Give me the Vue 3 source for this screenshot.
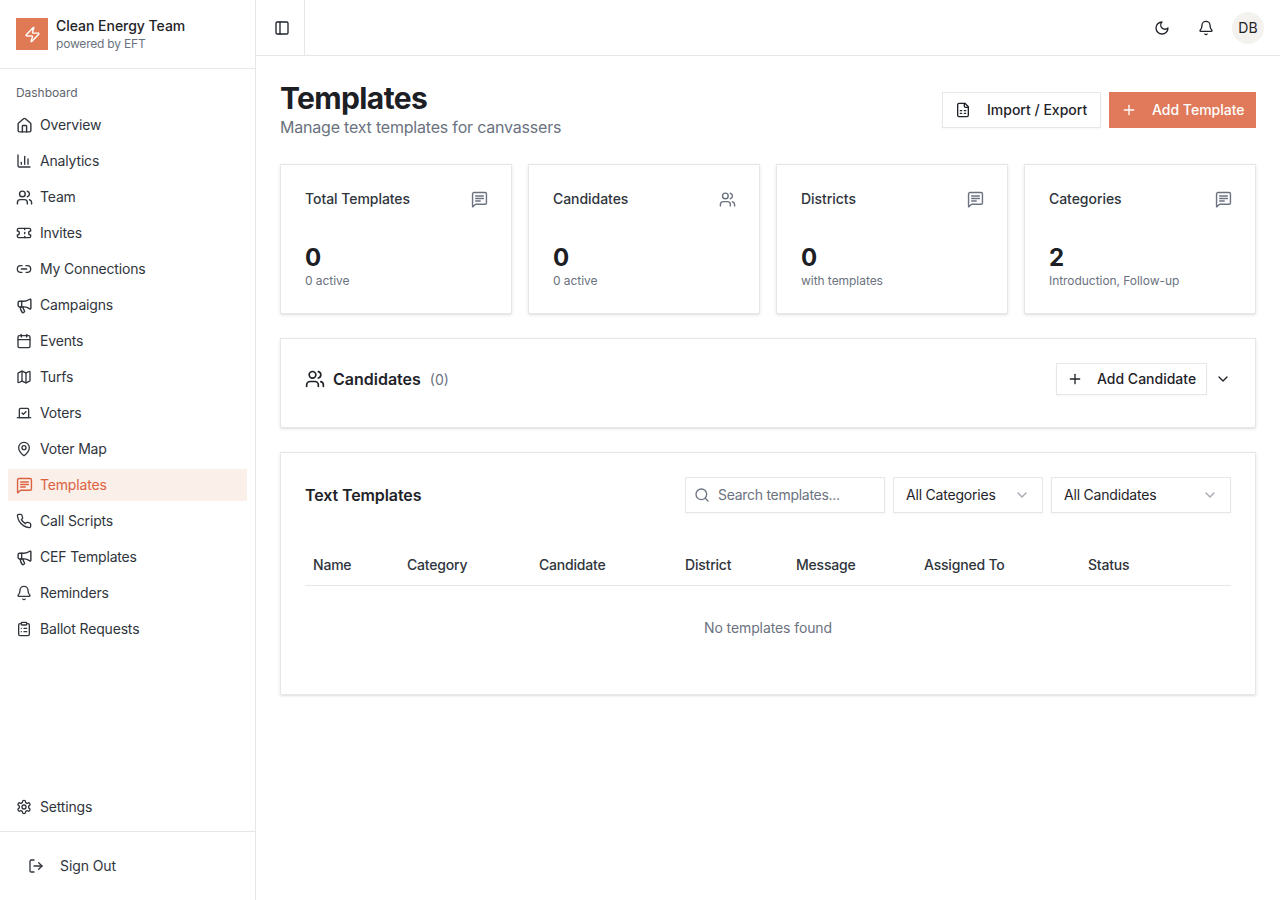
<script setup>
const P = {
  house: ['M15 21v-8a1 1 0 0 0-1-1h-4a1 1 0 0 0-1 1v8', 'M3 10a2 2 0 0 1 .709-1.528l7-5.999a2 2 0 0 1 2.582 0l7 5.999A2 2 0 0 1 21 10v9a2 2 0 0 1-2 2H5a2 2 0 0 1-2-2z'],
  chart: ['M3 3v16a2 2 0 0 0 2 2h16', 'M18 17V9', 'M13 17V5', 'M8 17v-3'],
  users: ['M16 21v-2a4 4 0 0 0-4-4H6a4 4 0 0 0-4 4v2', 'M13 7a4 4 0 1 1-8 0a4 4 0 0 1 8 0', 'M22 21v-2a4 4 0 0 0-3-3.87', 'M16 3.13a4 4 0 0 1 0 7.75'],
  ticket: ['M2 9a3 3 0 0 1 0 6v2a2 2 0 0 0 2 2h16a2 2 0 0 0 2-2v-2a3 3 0 0 1 0-6V7a2 2 0 0 0-2-2H4a2 2 0 0 0-2 2Z', 'M13 5v2', 'M13 17v2', 'M13 11v2'],
  link: ['M9 17H7A5 5 0 0 1 7 7h2', 'M15 7h2a5 5 0 1 1 0 10h-2', 'M8 12h8'],
  megaphone: ['M11 6a13 13 0 0 0 8.4-2.8A1 1 0 0 1 21 4v12a1 1 0 0 1-1.6.8A13 13 0 0 0 11 14H5a2 2 0 0 1-2-2V8a2 2 0 0 1 2-2z', 'M6 14a12 12 0 0 0 2.4 7.2 2 2 0 0 0 3.2-2.4A8 8 0 0 1 10 14', 'M8 6v8'],
  calendar: ['M8 2v4', 'M16 2v4', 'M5 4h14a2 2 0 0 1 2 2v14a2 2 0 0 1-2 2H5a2 2 0 0 1-2-2V6a2 2 0 0 1 2-2z', 'M3 10h18'],
  map: ['M14.106 5.553a2 2 0 0 0 1.788 0l3.659-1.83A1 1 0 0 1 21 4.619v12.764a1 1 0 0 1-.553.894l-4.553 2.277a2 2 0 0 1-1.788 0l-4.212-2.106a2 2 0 0 0-1.788 0l-3.659 1.83A1 1 0 0 1 3 19.381V6.618a1 1 0 0 1 .553-.894l4.553-2.277a2 2 0 0 1 1.788 0z', 'M15 5.764v15', 'M9 3.236v15'],
  vote: ['m9 12 2 2 4-4', 'M5 7c0-1.1.9-2 2-2h10a2 2 0 0 1 2 2v12H5V7Z', 'M22 19H2'],
  pin: ['M20 10c0 4.993-5.539 10.193-7.399 11.799a1 1 0 0 1-1.202 0C9.539 20.193 4 14.993 4 10a8 8 0 0 1 16 0', 'M15 10a3 3 0 1 1-6 0a3 3 0 0 1 6 0'],
  message: ['M2.2 4.2a2 2 0 0 1 2-2h15.6a2 2 0 0 1 2 2v12.6a2 2 0 0 1-2 2H6.6l-4.4 3.6z', 'M6.6 7h10.8', 'M6.6 10.6h10.8', 'M6.6 14.2h6.4'],
  phone: ['M22 16.92v3a2 2 0 0 1-2.18 2 19.79 19.79 0 0 1-8.63-3.07 19.5 19.5 0 0 1-6-6 19.79 19.79 0 0 1-3.07-8.67A2 2 0 0 1 4.11 2h3a2 2 0 0 1 2 1.72 12.84 12.84 0 0 0 .7 2.81 2 2 0 0 1-.45 2.11L8.09 9.91a16 16 0 0 0 6 6l1.27-1.27a2 2 0 0 1 2.11-.45 12.84 12.84 0 0 0 2.81.7A2 2 0 0 1 22 16.92z'],
  bell: ['M10.268 21a2 2 0 0 0 3.464 0', 'M3.262 15.326A1 1 0 0 0 4 17h16a1 1 0 0 0 .74-1.673C19.41 13.956 18 12.499 18 8A6 6 0 0 0 6 8c0 4.499-1.411 5.956-2.738 7.326'],
  clipboard: ['M9 2h6a1 1 0 0 1 1 1v2a1 1 0 0 1-1 1H9a1 1 0 0 1-1-1V3a1 1 0 0 1 1-1z', 'M16 4h2a2 2 0 0 1 2 2v14a2 2 0 0 1-2 2H6a2 2 0 0 1-2-2V6a2 2 0 0 1 2-2h2', 'M12 11h4', 'M12 16h4', 'M8 11h.01', 'M8 16h.01'],
  settings: ['M12.22 2h-.44a2 2 0 0 0-2 2v.18a2 2 0 0 1-1 1.73l-.43.25a2 2 0 0 1-2 0l-.15-.08a2 2 0 0 0-2.73.73l-.22.38a2 2 0 0 0 .73 2.73l.15.1a2 2 0 0 1 1 1.72v.51a2 2 0 0 1-1 1.74l-.15.09a2 2 0 0 0-.73 2.73l.22.38a2 2 0 0 0 2.73.73l.15-.08a2 2 0 0 1 2 0l.43.25a2 2 0 0 1 1 1.73V20a2 2 0 0 0 2 2h.44a2 2 0 0 0 2-2v-.18a2 2 0 0 1 1-1.73l.43-.25a2 2 0 0 1 2 0l.15.08a2 2 0 0 0 2.73-.73l.22-.39a2 2 0 0 0-.73-2.73l-.15-.08a2 2 0 0 1-1-1.74v-.5a2 2 0 0 1 1-1.74l.15-.09a2 2 0 0 0 .73-2.73l-.22-.38a2 2 0 0 0-2.73-.73l-.15.08a2 2 0 0 1-2 0l-.43-.25a2 2 0 0 1-1-1.73V4a2 2 0 0 0-2-2z', 'M15 12a3 3 0 1 1-6 0a3 3 0 0 1 6 0'],
  logout: ['m16 17 5-5-5-5', 'M21 12H9', 'M9 21H5a2 2 0 0 1-2-2V5a2 2 0 0 1 2-2h4'],
  panel: ['M5 3h14a2 2 0 0 1 2 2v14a2 2 0 0 1-2 2H5a2 2 0 0 1-2-2V5a2 2 0 0 1 2-2z', 'M9 3v18'],
  moon: ['M12 3a6 6 0 0 0 9 9 9 9 0 1 1-9-9Z'],
  sheet: ['M15 2H6a2 2 0 0 0-2 2v16a2 2 0 0 0 2 2h12a2 2 0 0 0 2-2V7Z', 'M14 2v4a2 2 0 0 0 2 2h4', 'M8 13h2', 'M14 13h2', 'M8 17h2', 'M14 17h2'],
  plus: ['M5 12h14', 'M12 5v14'],
  chevron: ['m6 9 6 6 6-6'],
  search: ['M19 11a8 8 0 1 1-16 0a8 8 0 0 1 16 0', 'm21 21-4.3-4.3'],
  zap: ['M4 14a1 1 0 0 1-.78-1.63l9.9-10.2a.5.5 0 0 1 .86.46l-1.92 6.02A1 1 0 0 0 13 10h7a1 1 0 0 1 .78 1.63l-9.9 10.2a.5.5 0 0 1-.86-.46l1.92-6.02A1 1 0 0 0 11 14z'],
}
const big = new Set(['house', 'users', 'megaphone', 'message'])
const nav = [
  ['Overview', 'house'], ['Analytics', 'chart'], ['Team', 'users'], ['Invites', 'ticket'],
  ['My Connections', 'link'], ['Campaigns', 'megaphone'], ['Events', 'calendar'], ['Turfs', 'map'],
  ['Voters', 'vote'], ['Voter Map', 'pin'], ['Templates', 'message'], ['Call Scripts', 'phone'],
  ['CEF Templates', 'megaphone'], ['Reminders', 'bell'], ['Ballot Requests', 'clipboard'],
]
const stats = [
  ['Total Templates', 'message', '0', '0 active'],
  ['Candidates', 'users', '0', '0 active'],
  ['Districts', 'message', '0', 'with templates'],
  ['Categories', 'message', '2', 'Introduction, Follow-up'],
]
const cols = ['Name', 'Category', 'Candidate', 'District', 'Message', 'Assigned To', 'Status']
</script>

<template>
  <div class="app">
    <aside class="sidebar">
      <div class="brand">
        <div class="logo">
          <svg class="i17" viewBox="0 0 24 24"><path v-for="d in P.zap" :key="d" :d="d" /></svg>
        </div>
        <div class="brand-text">
          <div class="brand-name">Clean Energy Team</div>
          <div class="brand-sub">powered by EFT</div>
        </div>
      </div>
      <nav class="nav">
        <div class="nav-label">Dashboard</div>
        <a v-for="n in nav" :key="n[0]" class="nav-item" :class="{ active: n[0] === 'Templates' }">
          <svg :class="big.has(n[1]) ? 'i17' : 'i16'" viewBox="0 0 24 24"><path v-for="d in P[n[1]]" :key="d" :d="d" /></svg>
          <span>{{ n[0] }}</span>
        </a>
      </nav>
      <div class="nav-bottom">
        <a class="nav-item">
          <svg class="i16" viewBox="0 0 24 24"><path v-for="d in P.settings" :key="d" :d="d" /></svg>
          <span>Settings</span>
        </a>
      </div>
      <div class="signout">
        <svg class="i16" viewBox="0 0 24 24"><path v-for="d in P.logout" :key="d" :d="d" /></svg>
        <span>Sign Out</span>
      </div>
    </aside>

    <div class="content">
      <header class="topbar">
        <div class="toggle">
          <svg class="i16" viewBox="0 0 24 24"><path v-for="d in P.panel" :key="d" :d="d" /></svg>
        </div>
        <div class="top-actions">
          <svg class="i16" viewBox="0 0 24 24"><path v-for="d in P.moon" :key="d" :d="d" /></svg>
          <svg class="i16 top-bell" viewBox="0 0 24 24"><path v-for="d in P.bell" :key="d" :d="d" /></svg>
          <div class="avatar">DB</div>
        </div>
      </header>

      <main class="main">
        <div class="page-head">
          <div>
            <h1>Templates</h1>
            <p>Manage text templates for canvassers</p>
          </div>
          <div class="head-actions">
            <button class="btn outline import">
              <svg class="i16" viewBox="0 0 24 24"><path v-for="d in P.sheet" :key="d" :d="d" /></svg>
              <span>Import / Export</span>
            </button>
            <button class="btn primary">
              <svg class="i16" viewBox="0 0 24 24"><path v-for="d in P.plus" :key="d" :d="d" /></svg>
              <span>Add Template</span>
            </button>
          </div>
        </div>

        <div class="stats">
          <div v-for="s in stats" :key="s[0]" class="card stat">
            <div class="stat-top">
              <span>{{ s[0] }}</span>
              <svg class="muted" :class="big.has(s[1]) ? 'i17' : 'i16'" viewBox="0 0 24 24"><path v-for="d in P[s[1]]" :key="d" :d="d" /></svg>
            </div>
            <div class="stat-value">{{ s[2] }}</div>
            <div class="stat-sub">{{ s[3] }}</div>
          </div>
        </div>

        <section class="card candidates">
          <div class="cand-title">
            <svg class="i20" viewBox="0 0 24 24"><path v-for="d in P.users" :key="d" :d="d" /></svg>
            <strong>Candidates</strong>
            <span>(0)</span>
          </div>
          <div class="cand-actions">
            <button class="btn outline small">
              <svg class="i16" viewBox="0 0 24 24"><path v-for="d in P.plus" :key="d" :d="d" /></svg>
              <span>Add Candidate</span>
            </button>
            <svg class="i16" viewBox="0 0 24 24"><path v-for="d in P.chevron" :key="d" :d="d" /></svg>
          </div>
        </section>

        <section class="card templates">
          <div class="tpl-head">
            <h2>Text Templates</h2>
            <div class="filters">
              <div class="field search">
                <svg class="i16 muted" viewBox="0 0 24 24"><path v-for="d in P.search" :key="d" :d="d" /></svg>
                <span>Search templates...</span>
              </div>
              <div class="field select cat">
                <span>All Categories</span>
                <svg class="i16 faint" viewBox="0 0 24 24"><path v-for="d in P.chevron" :key="d" :d="d" /></svg>
              </div>
              <div class="field select cand">
                <span>All Candidates</span>
                <svg class="i16 faint" viewBox="0 0 24 24"><path v-for="d in P.chevron" :key="d" :d="d" /></svg>
              </div>
            </div>
          </div>
          <div class="thead">
            <div v-for="c in cols" :key="c">{{ c }}</div>
          </div>
          <div class="empty">No templates found</div>
        </section>
      </main>
    </div>
  </div>
</template>

<style>
html, body { margin: 0; background: #fff; }
</style>

<style scoped>
.app {
  display: flex;
  width: 1280px;
  height: 900px;
  overflow: hidden;
  font-family: Inter, "Open Sans", sans-serif;
  font-size: 14px;
  color: #1f2329;
  background: #fff;
}
svg { fill: none; stroke: currentColor; stroke-width: 2; stroke-linecap: round; stroke-linejoin: round; flex: none; display: block; }
.i16 { width: 16px; height: 16px; }
.i17 { width: 17px; height: 17px; margin: -0.5px; }
.i20 { width: 20px; height: 20px; }
.muted { color: #6b7280; }
.faint { color: #a3a8b2; }

.sidebar {
  width: 255px;
  flex: none;
  border-right: 1px solid #e5e7eb;
  display: flex;
  flex-direction: column;
}
.brand {
  height: 68px;
  box-sizing: content-box;
  border-bottom: 1px solid #e5e7eb;
  display: flex;
  align-items: center;
  gap: 8px;
  padding: 0 16px;
}
.logo {
  width: 32px;
  height: 32px;
  background: #e07a55;
  color: #fff;
  display: flex;
  align-items: center;
  justify-content: center;
}
.brand-text { padding-top: 1px; }
.brand-name { font-weight: 450; line-height: 17px; letter-spacing: -0.03px; }
.brand-sub { font-size: 12px; line-height: 17px; margin-top: 1px; color: #6b7280; letter-spacing: -0.2px; }
.nav { padding: 16px 8px 0; display: flex; flex-direction: column; gap: 4px; flex: 1; }
.nav-label { font-size: 12px; line-height: 16px; color: #5f6570; padding: 0 8px; height: 20px; letter-spacing: -0.05px; }
.nav-item {
  height: 32px;
  display: flex;
  align-items: center;
  gap: 8px;
  padding: 0 8px;
  width: 239px;
  box-sizing: border-box;
  color: #30353c;
  letter-spacing: -0.17px;
}
.nav-item span { padding-bottom: 2px; }
.nav-item.active { background: #fbefea; color: #da6240; }
.nav-bottom { padding: 0 8px 8px; }
.signout {
  border-top: 1px solid #e5e7eb;
  height: 69px;
  box-sizing: border-box;
  padding: 0 0 0 28px;
  display: flex;
  align-items: center;
  gap: 16px;
  color: #30353c;
  letter-spacing: -0.1px;
}
.signout span { padding-bottom: 2px; }

.content { flex: 1; min-width: 0; display: flex; flex-direction: column; }
.topbar {
  height: 55px;
  box-sizing: content-box;
  border-bottom: 1px solid #e5e7eb;
  display: flex;
  align-items: stretch;
  justify-content: space-between;
}
.toggle {
  width: 49px;
  box-sizing: border-box;
  border-right: 1px solid #e5e7eb;
  display: flex;
  align-items: center;
  padding-left: 18px;
}
.top-actions { display: flex; align-items: center; padding-right: 16px; }
.top-bell { margin-left: 28px; margin-right: 18px; }
.avatar {
  width: 32px;
  height: 32px;
  border-radius: 50%;
  background: #f3f2ef;
  display: flex;
  align-items: center;
  justify-content: center;
  font-size: 14px;
}

.main { padding: 24px; }
.page-head { display: flex; justify-content: space-between; align-items: center; height: 60px; }
h1 { margin: 0; font-size: 30px; line-height: 36px; font-weight: 700; color: #1c2024; letter-spacing: -0.62px; }
.page-head p { margin: 0; font-size: 16px; line-height: 22px; padding-bottom: 2px; color: #6b7280; letter-spacing: -0.2px; }
.head-actions { display: flex; gap: 8px; }
.btn {
  height: 36px;
  box-sizing: border-box;
  display: inline-flex;
  align-items: center;
  font: inherit;
  font-size: 14px;
  font-weight: 450;
  border: 0;
  border-radius: 0;
  padding: 0 12px;
  gap: 15px;
  white-space: nowrap;
}
.btn span { padding-bottom: 2px; }
.btn.outline { background: #fff; border: 1px solid #e5e7eb; color: #1f2329; box-shadow: 0 1px 2px rgba(0,0,0,.04); }
.btn.primary { background: #e07a5a; color: #fff; width: 147px; }
.btn.import { width: 159px; padding: 0 12px; gap: 16px; }
.btn.small { height: 32px; width: 151px; padding: 0 10px; gap: 14px; }

.card { background: #fff; border: 1px solid #e5e7eb; box-shadow: 0 1px 3px rgba(0,0,0,.1), 0 1px 2px -1px rgba(0,0,0,.1); box-sizing: border-box; }
.stats { display: grid; grid-template-columns: repeat(4, 232px); gap: 16px; margin-top: 24px; }
.stat { height: 150px; padding: 24px; }
.stat-top { display: flex; justify-content: space-between; align-items: center; height: 20px; font-weight: 450; color: #30353c; letter-spacing: -0.05px; }
.stat-top span { padding-bottom: 2px; }
.stat-value { margin-top: 33px; font-size: 24px; line-height: 32px; font-weight: 700; color: #1c2024; }
.stat-sub { font-size: 12px; line-height: 16px; margin-top: -1px; color: #6b7280; letter-spacing: -0.05px; }

.candidates {
  margin-top: 24px;
  height: 90px;
  padding: 24px 24px 32px;
  display: flex;
  justify-content: space-between;
  align-items: center;
}
.cand-title { display: flex; align-items: center; gap: 8px; }
.cand-title strong { font-size: 16px; font-weight: 600; }
.cand-title span { color: #6b7280; margin-left: 1px; }
.cand-actions { display: flex; align-items: center; gap: 8px; }

.templates { margin-top: 24px; height: 243px; padding: 24px; }
.tpl-head { display: flex; justify-content: space-between; align-items: center; height: 36px; }
h2 { margin: 0; font-size: 16px; font-weight: 600; padding-bottom: 1px; letter-spacing: -0.1px; }
.filters { display: flex; gap: 8px; }
.field {
  height: 36px;
  box-sizing: border-box;
  border: 1px solid #e5e7eb;
  box-shadow: 0 1px 2px rgba(0,0,0,.04);
  display: flex;
  align-items: center;
  padding: 0 12px;
  background: #fff;
  letter-spacing: -0.2px;
}
.field span { padding-bottom: 2px; }
.search { width: 200px; padding: 0 8px; gap: 8px; color: #6b7280; letter-spacing: -0.28px; }
.select { justify-content: space-between; }
.cat { width: 150px; }
.cand { width: 180px; }
.thead {
  display: grid;
  grid-template-columns: 94px 132px 146px 111px 128px 164px 1fr;
  height: 40px;
  margin-top: 32px;
  align-items: center;
  font-weight: 450;
  color: #30353c;
  border-bottom: 1px solid #e5e7eb;
  letter-spacing: -0.2px;
}
.thead div { padding: 0 0 2px 8px; }
.empty { text-align: center; color: #6b7280; margin-top: 32px; line-height: 20px; letter-spacing: -0.1px; }
</style>
